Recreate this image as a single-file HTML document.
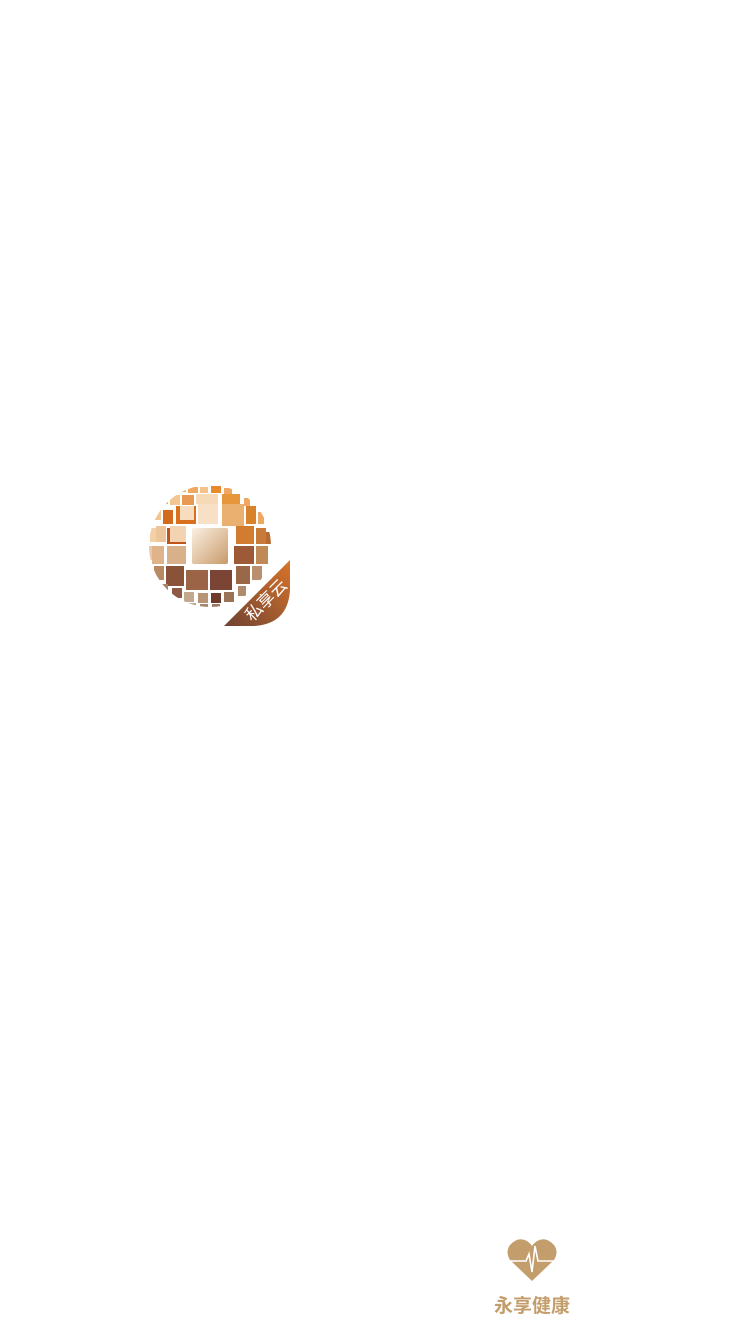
<!DOCTYPE html>
<html><head><meta charset="utf-8"><style>
html,body{margin:0;padding:0;background:#fff;width:750px;height:1334px;overflow:hidden;position:relative}
.t{position:absolute;left:0;top:1291px;width:1064px;text-align:center;font:bold 19px "Liberation Sans","Noto Sans CJK SC",sans-serif;color:#c39d6b;letter-spacing:0px}
</style></head><body>
<svg width="750" height="1334" style="position:absolute;left:0;top:0">
<defs>
<linearGradient id="c" x1="0" y1="0" x2="1" y2="1"><stop offset="0" stop-color="#fbf0e2"/><stop offset="1" stop-color="#c89a6a"/></linearGradient>
<linearGradient id="b" x1="1" y1="0" x2="0" y2="1"><stop offset="0" stop-color="#d9742a"/><stop offset="1" stop-color="#6e4232"/></linearGradient>
<clipPath id="cl"><circle cx="210" cy="546" r="61"/></clipPath>
</defs>
<g clip-path="url(#cl)">
<g fill="#f0a860">
<rect x="178" y="487" width="8" height="5"/><rect x="188" y="487" width="10" height="6"/><rect x="200" y="487" width="8" height="6" fill="#f5c08a"/><rect x="211" y="486" width="10" height="7" fill="#e98a2a"/><rect x="224" y="488" width="8" height="6"/>
<rect x="162" y="496" width="6" height="8"/><rect x="170" y="495" width="10" height="10" fill="#f3c58f"/><rect x="182" y="495" width="12" height="10" fill="#e89a52"/><rect x="196" y="494" width="22" height="10" fill="#f6d9b6"/><rect x="222" y="494" width="18" height="10" fill="#e7963c"/><rect x="244" y="498" width="6" height="8"/>
<rect x="155" y="508" width="6" height="12" fill="#f4c590"/><rect x="163" y="510" width="10" height="14" fill="#d46a1c"/><rect x="176" y="506" width="20" height="18" fill="#d9701e"/><rect x="180" y="506" width="14" height="14" fill="#f7dcc0"/><rect x="198" y="504" width="20" height="20" fill="#f7e0c6"/><rect x="222" y="504" width="22" height="22" fill="#eab070"/><rect x="246" y="506" width="10" height="18" fill="#d8832c"/><rect x="258" y="512" width="6" height="12"/>
<rect x="150" y="528" width="6" height="14" fill="#f3d0a8"/><rect x="156" y="526" width="10" height="16" fill="#ecc69a"/><rect x="167" y="528" width="19" height="16" fill="#c0541a"/><rect x="170" y="526" width="16" height="16" fill="#f2d4b2"/><rect x="236" y="526" width="18" height="18" fill="#d27c30"/><rect x="256" y="528" width="10" height="16" fill="#c87a38"/><rect x="266" y="532" width="6" height="12" fill="#b86a30"/>
<rect x="148" y="546" width="4" height="14" fill="#e8c8a8"/><rect x="152" y="546" width="12" height="18" fill="#e0b48a"/><rect x="167" y="546" width="19" height="18" fill="#d8b08a"/><rect x="234" y="546" width="20" height="18" fill="#9c5a36"/><rect x="256" y="546" width="12" height="18" fill="#c08a56"/>
<rect x="154" y="566" width="10" height="14" fill="#b88a64"/><rect x="166" y="566" width="18" height="20" fill="#8a5238"/><rect x="186" y="570" width="22" height="20" fill="#9c6446"/><rect x="210" y="570" width="22" height="20" fill="#7c4434"/><rect x="236" y="566" width="14" height="18" fill="#9a6848"/><rect x="252" y="566" width="10" height="14" fill="#b89070"/>
<rect x="162" y="584" width="6" height="8" fill="#a8846a"/><rect x="172" y="588" width="10" height="10" fill="#8e5a44"/><rect x="184" y="592" width="10" height="10" fill="#c4a88e"/><rect x="198" y="593" width="10" height="10" fill="#b89474"/><rect x="211" y="593" width="10" height="10" fill="#6e3a2c"/><rect x="224" y="592" width="10" height="10" fill="#9a7256"/><rect x="238" y="586" width="8" height="10" fill="#b08a6c"/>
<rect x="188" y="603" width="8" height="5" fill="#c4a88e"/><rect x="200" y="604" width="8" height="4" fill="#a88670"/><rect x="212" y="604" width="8" height="4" fill="#9c7a64"/>
</g>
</g>
<rect x="192" y="528" width="36" height="36" rx="2" fill="url(#c)"/>
<path d="M224 626 L290 560 L290 590 Q288 624 254 626 Z" fill="url(#b)"/>
<text x="266" y="606" transform="rotate(-45 266 600)" text-anchor="middle" font-family="Liberation Sans,Noto Sans CJK SC,sans-serif" font-size="17" fill="#fff">私享云</text>
<path d="M532 1281 L510 1260 Q505 1252 510 1245 Q518 1236 527 1241 Q530 1243 532 1246 Q534 1243 537 1241 Q546 1236 554 1245 Q559 1252 554 1260 Z" fill="#c39d6b"/>
<path d="M508 1261 L526 1261 L529 1254 L532 1272 L535 1246 L538 1261 L556 1261" fill="none" stroke="#fff" stroke-width="1.6"/>
</svg>
<div class="t">永享健康</div>
</body></html>
